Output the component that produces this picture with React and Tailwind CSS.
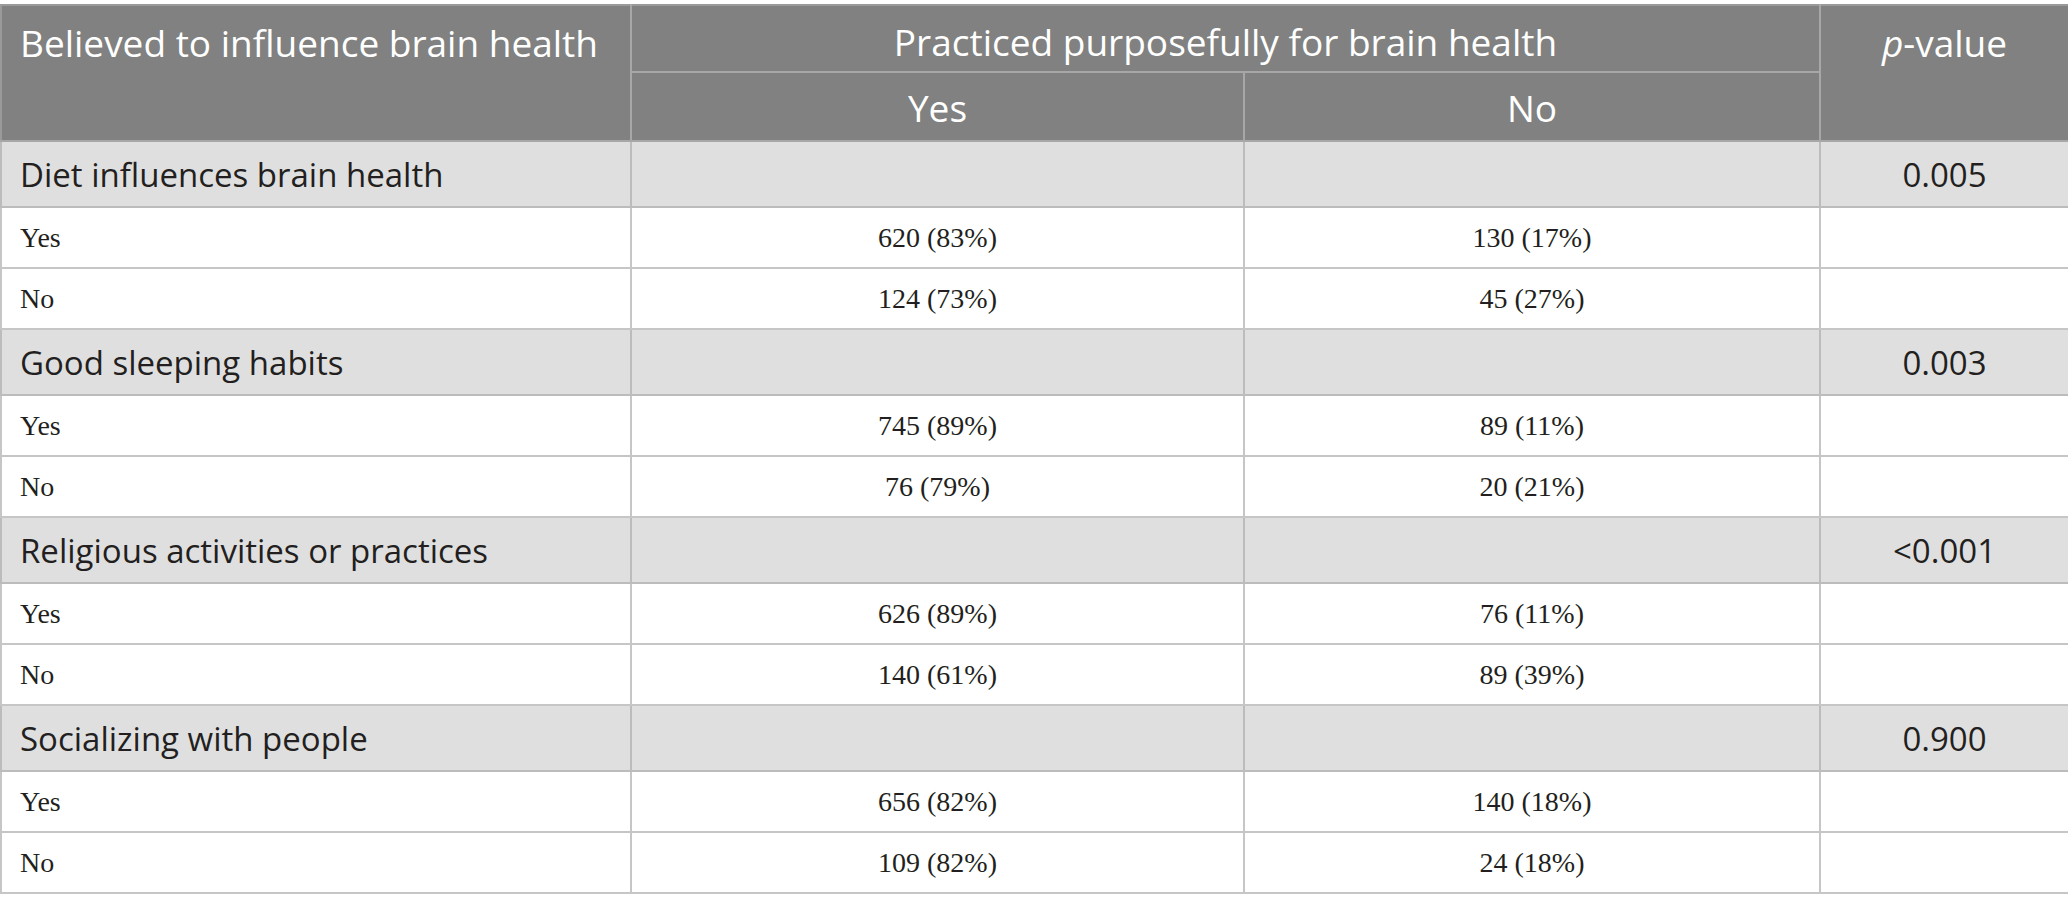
import React from "react";

const groups = [
  { label: "Diet influences brain health", p: "0.005", rows: [["Yes", "620 (83%)", "130 (17%)"], ["No", "124 (73%)", "45 (27%)"]] },
  { label: "Good sleeping habits", p: "0.003", rows: [["Yes", "745 (89%)", "89 (11%)"], ["No", "76 (79%)", "20 (21%)"]] },
  { label: "Religious activities or practices", p: "<0.001", rows: [["Yes", "626 (89%)", "76 (11%)"], ["No", "140 (61%)", "89 (39%)"]] },
  { label: "Socializing with people", p: "0.900", rows: [["Yes", "656 (82%)", "140 (18%)"], ["No", "109 (82%)", "24 (18%)"]] },
];

const sans = "font-['Open_Sans','Noto_Sans',sans-serif]";
const serif = "font-['Liberation_Serif','Times_New_Roman',serif]";

export default function App() {
  return (
    <div className="w-[2068px] h-[911px] bg-white pt-[4px]">
      <table className="w-[2068px] table-fixed border-collapse">
        <colgroup>
          <col className="w-[630px]" />
          <col className="w-[613px]" />
          <col className="w-[576px]" />
          <col className="w-[249px]" />
        </colgroup>
        <thead className={`${sans} text-white text-[37px] font-normal leading-none`}>
          <tr className="h-[67px] bg-[#808180]">
            <td rowSpan={2} className="align-top pl-[18px] pt-[18px] border-2 border-[#a6a7a6] border-t-[#9a9a9a] border-l-[#9a9a9a]">
              Believed to influence brain health
            </td>
            <td colSpan={2} className="text-center align-middle pt-[6px] border-2 border-[#a6a7a6] border-t-[#9a9a9a]">
              Practiced purposefully for brain health
            </td>
            <td rowSpan={2} className="align-top text-center pt-[18px] border-2 border-[#a6a7a6] border-t-[#9a9a9a] border-r-[#9a9a9a]">
              <span className="italic">p</span>-value
            </td>
          </tr>
          <tr className="h-[69px] bg-[#808180]">
            <td className="text-center align-middle pt-[2px] border-2 border-[#a6a7a6]">Yes</td>
            <td className="text-center align-middle pt-[2px] border-2 border-[#a6a7a6]">No</td>
          </tr>
        </thead>
        <tbody className="text-[#231f20]">
          {groups.map((g) => (
            <React.Fragment key={g.label}>
              <tr className={`h-[66px] bg-[#e0dfe0] ${sans} text-[33px] leading-none`}>
                <td className="pl-[18px] border-2 border-[#bcbcbc]">{g.label}</td>
                <td className="border-2 border-[#bcbcbc]"></td>
                <td className="border-2 border-[#bcbcbc]"></td>
                <td className="text-center border-2 border-[#bcbcbc]">{g.p}</td>
              </tr>
              {g.rows.map((r) => (
                <tr key={r[0]} className={`h-[61px] bg-white ${serif} text-[28px] leading-none`}>
                  <td className="pl-[18px] border-2 border-[#c6c6c6]">{r[0]}</td>
                  <td className="text-center border-2 border-[#c6c6c6]">{r[1]}</td>
                  <td className="text-center border-2 border-[#c6c6c6]">{r[2]}</td>
                  <td className="border-2 border-[#c6c6c6]"></td>
                </tr>
              ))}
            </React.Fragment>
          ))}
        </tbody>
      </table>
    </div>
  );
}
